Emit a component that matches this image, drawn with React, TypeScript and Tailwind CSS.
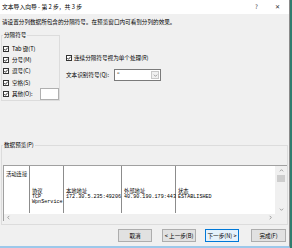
import React from "react";

const CJK = "font-['Microsoft_YaHei','Noto_Sans_CJK_SC',sans-serif]";
const MONO = "font-['Liberation_Mono','Noto_Sans_CJK_SC',monospace]";

function Check({ checked = true }: { checked?: boolean }) {
  return (
    <span className="w-[6px] h-[6px] border border-[#333] bg-white flex items-center justify-center shrink-0">
      {checked && (
        <svg viewBox="0 0 4 4" className="w-[4px] h-[4px]">
          <path d="M0.3 2 L1.5 3.3 L3.7 0.7" fill="none" stroke="#222" strokeWidth="0.9" />
        </svg>
      )}
    </span>
  );
}

function Btn({ label, primary = false, w = "w-[34px]" }: { label: string; primary?: boolean; w?: string }) {
  return (
    <div
      className={`${w} h-[13px] flex items-center justify-center whitespace-nowrap border ${
        primary ? "border-[#0078d7] bg-[#e5f1fb]" : "border-[#adadad] bg-[#e1e1e1]"
      }`}
    >
      {label}
    </div>
  );
}

const columns = [
  { w: "w-[26px]", rows: ["活动连接", "", "", "", "", ""] },
  { w: "w-[34px]", rows: ["", "", "", "协议", "TCP", "WpnService"] },
  { w: "w-[58px]", rows: ["", "", "", "本地地址", "172.30.5.235:49206", ""] },
  { w: "w-[54px]", rows: ["", "", "", "外部地址", "40.90.190.179:443", ""] },
  { w: "flex-1", rows: ["", "", "", "状态", "ESTABLISHED", ""] },
];

function Chevron({ dir }: { dir: "up" | "down" | "left" | "right" }) {
  const d = {
    up: "M1 4 L3 2 L5 4",
    down: "M1 2 L3 4 L5 2",
    left: "M4 1 L2 3 L4 5",
    right: "M2 1 L4 3 L2 5",
  }[dir];
  return (
    <svg viewBox="0 0 6 6" className="w-[5px] h-[5px]">
      <path d={d} fill="none" stroke="#7a7a7a" strokeWidth="0.8" />
    </svg>
  );
}

export default function App() {
  const rows = ["Tab 键(T)", "分号(M)", "逗号(C)", "空格(S)"];
  return (
    <div className={`w-[292px] h-[248px] flex overflow-hidden bg-[#2f7d6e] ${CJK} text-[5.6px] leading-[6px] text-black whitespace-nowrap`}>
      {/* Dialog window */}
      <div className="w-[290px] h-[248px] flex flex-col bg-[#f0f0f0] border-r border-r-[#8a8a8a] border-b-2 border-b-[#9cc8ea]">
        {/* Title bar */}
        <div className="h-[14px] shrink-0 bg-white flex items-center pl-[2px]">
          <span className="text-[5.8px]">文本导入向导 - 第 2 步，共 3 步</span>
          <div className="ml-auto flex pr-[1px] text-[6px] text-[#333]">
            <span className="w-[21px] text-center">?</span>
            <span className="w-[21px] text-center">✕</span>
          </div>
        </div>

        <div className="mt-[5px] pl-[2px]">请设置分列数据所包含的分隔符号。在预览窗口内可看到分列的效果。</div>

        {/* Delimiters */}
        <div className="mt-[7px] flex items-start">
          <fieldset className="ml-[1px] w-[59px] h-[69px] border border-[#dcdcdc]">
            <legend className="ml-[1px] px-[1px]">分隔符号</legend>
            <div className="pt-[5px] pl-[1px] flex flex-col">
              {rows.map((r) => (
                <div key={r} className="h-[11.4px] flex items-center gap-[3px]">
                  <Check />
                  <span>{r}</span>
                </div>
              ))}
              <div className="h-[11.4px] flex items-center gap-[3px]">
                <Check />
                <span>其他(O):</span>
                <span className="ml-[4px] w-[19px] h-[12px] shrink-0 bg-white border border-[#b0b0b0]" />
              </div>
            </div>
          </fieldset>

          <div className="ml-[6px] flex flex-col">
            <div className="mt-[23px] h-[6px] flex items-center gap-[2px]">
              <Check />
              <span>连续分隔符号视为单个处理(R)</span>
            </div>
            <div className="mt-[8px] h-[12px] flex items-center">
              <span>文本识别符号(Q):</span>
              <div className="ml-[5px] w-[47px] h-[12px] flex bg-white border border-[#7a7a7a]">
                <span className="pl-[2px] flex items-center">"</span>
                <div className="ml-auto w-[8px] m-[1px] bg-[#f0f0f0] border border-[#c8c8c8] flex items-center justify-center">
                  <Chevron dir="down" />
                </div>
              </div>
            </div>
          </div>
        </div>

        {/* Preview */}
        <fieldset className="mt-[41px] ml-[1px] w-[287px] h-[83px] border border-[#dcdcdc]">
          <legend className="ml-[1px] px-[1px]">数据预览(P)</legend>
          <div className="mt-[17px] ml-[1px] w-[284px] grid grid-cols-[1fr_12px] grid-rows-[48px_7px] border-t border-l border-[#a0a0a0]">
            <div className="bg-white flex">
              {columns.map((c, i) => (
                <div key={i} className={`${c.w} h-[47px] flex flex-col pt-[6px] pl-[2px] ${i < columns.length - 1 ? "border-r border-[#8c8c8c]" : ""}`}>
                  {c.rows.map((t, j) => (
                    <div
                      key={j}
                      className={`h-[5.67px] leading-[5.67px] ${
                        /^[\x00-\x7f]+$/.test(t) ? `${MONO} text-[5.1px]` : "text-[5.3px]"
                      }`}
                    >
                      {t}
                    </div>
                  ))}
                </div>
              ))}
            </div>
            <div className="bg-[#f0f0f0] flex flex-col items-center pt-[2px] pb-[2px]">
              <Chevron dir="up" />
              <div className="mt-[2px] w-[8px] h-[7px] bg-[#cdcdcd]" />
              <div className="mt-auto">
                <Chevron dir="down" />
              </div>
            </div>
            <div className="bg-[#f0f0f0] flex items-center px-[2px]">
              <Chevron dir="left" />
              <div className="ml-auto">
                <Chevron dir="right" />
              </div>
            </div>
            <div className="bg-[#f0f0f0]" />
          </div>
        </fieldset>

        {/* Buttons */}
        <div className="mt-[4px] flex pl-[118px]">
          <Btn label="取消" />
          <div className="ml-[10px]">
            <Btn label="< 上一步(B)" />
          </div>
          <div className="ml-[9px]">
            <Btn label="下一步(N) >" primary />
          </div>
          <div className="ml-[12px]">
            <Btn label="完成(F)" w="w-[35px]" />
          </div>
        </div>
      </div>
      <div className="flex-1" />
    </div>
  );
}
